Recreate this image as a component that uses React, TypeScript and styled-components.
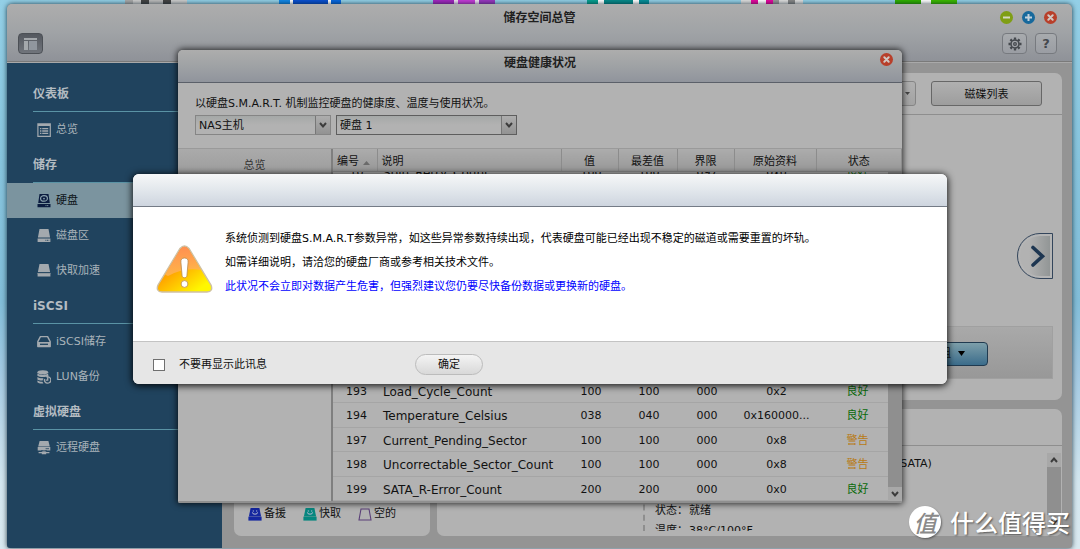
import React from "react";
import styled, { createGlobalStyle, css } from "styled-components";

const GlobalStyle = createGlobalStyle`
  * { box-sizing: border-box; }
  body {
    margin: 0;
    font-family: "DejaVu Sans", "Noto Sans CJK SC", sans-serif;
    font-size: 11px;
    line-height: 16px;
    color: #111;
  }
  button, select, input { font: inherit; color: inherit; margin: 0; }
`;

const Desktop = styled.div`
  position: relative;
  display: flex;
  flex-direction: column;
  min-height: 100vh;
  overflow: hidden;
  background: linear-gradient(#93cfe6 0%, #86c3dc 30%, #82bdd8 55%, #a3c9e2 68%, #d3e6ef 88%, #d9e9f0 100%);
`;

const Shortcuts = styled.div`
  display: flex;
  gap: 92px;
  height: 4px;
  padding-left: 125px;
  overflow: hidden;
`;

const Shortcut = styled.div<{ $fill: string }>`
  flex: none;
  width: 62px;
  background: ${(p) => p.$fill};
`;

const Window = styled.main`
  isolation: isolate;
  flex: 1;
  display: flex;
  flex-direction: column;
  margin: 0 8px 1px 7px;
  border-radius: 5px 5px 3px 3px;
  overflow: hidden;
  background: #949494;
  box-shadow: 0 0 5px rgba(0, 20, 30, 0.8);
`;

const WindowHead = styled.header`
  height: 58px;
  padding: 4px 15px 0 11px;
  background: linear-gradient(#adadad, #a0a3a6 50%, #8f9298);
  border-bottom: 1px solid #7a7a7a;
  box-shadow: 0 1px 0 #a9a9a9;
  z-index: 1;
`;

const HeadRow = styled.div`
  display: grid;
  grid-template-columns: 1fr auto 1fr;
  align-items: center;
  height: 18px;
  padding-left: 4px;
`;

const ToolRow = styled.div`
  display: flex;
  align-items: center;
  justify-content: space-between;
  margin-top: 7px;
`;

const Group = styled.div<{ $gap: number }>`
  display: flex;
  align-items: center;
  justify-content: flex-end;
  gap: ${(p) => p.$gap}px;
`;

const Title = styled.h1`
  grid-column: 2;
  margin: 0;
  padding-top: 2px;
  font-size: 12px;
  line-height: 16px;
  font-weight: 700;
  color: #1f1f1f;
`;

const RoundButton = styled.button<{ $color: string }>`
  display: flex;
  width: 13px;
  height: 13px;
  padding: 0;
  border: 0;
  border-radius: 50%;
  background: ${(p) => p.$color};
`;

const ToolButton = styled.button<{ $width: number; $dark?: boolean }>`
  display: flex;
  align-items: center;
  justify-content: center;
  width: ${(p) => p.$width}px;
  height: 21px;
  padding: 0;
  border: 1px solid #777a7f;
  border-radius: 4px;
  color: #44484d;
  font-size: 13px;
  font-weight: 700;
  background: linear-gradient(#a8abae, #9a9da3);
  ${(p) =>
    p.$dark &&
    css`
      border-color: #4c5056;
      background: linear-gradient(#54585f, #70747b);
    `}
`;

const Body = styled.div`
  flex: 1;
  display: flex;
`;

const Sidebar = styled.nav`
  flex: none;
  width: 215px;
  padding-top: 14px;
  background: #20435e;
`;

const SideHeading = styled.h2`
  display: flex;
  align-items: center;
  height: 36px;
  margin: 0 0 0 26px;
  border-bottom: 1px solid #5a93a5;
  font-size: 12px;
  font-weight: 700;
  color: #b4bcc2;
`;

const SideLink = styled.a<{ $active?: boolean }>`
  display: flex;
  align-items: center;
  gap: 5px;
  height: 35px;
  padding-left: 30px;
  color: ${(p) => (p.$active ? "#0d1318" : "#a9b3ba")};
  background: ${(p) => (p.$active ? "#7b949f" : "transparent")};
  text-decoration: none;
  svg { color: ${(p) => (p.$active ? "#0b1c40" : "#a3a9ae")}; }
`;

const Content = styled.div`
  flex: 1;
  min-width: 0;
  display: flex;
  flex-direction: column;
  gap: 9px;
  padding: 11px 10px 12px 12px;
`;

const Panel = styled.section`
  display: flex;
  flex-direction: column;
  min-width: 0;
  border-radius: 7px;
  background: #b2b2b2;
`;

const DiskPanel = styled(Panel)`
  min-height: 327px;
`;

const Toolbar = styled.div`
  display: flex;
  justify-content: flex-end;
  gap: 15px;
  padding: 8px 20px;
  border-bottom: 1px solid #8e8e8e;
`;

const PanelButton = styled.button`
  width: 111px;
  height: 25px;
  padding: 2px 0 0;
  border: 1px solid #676767;
  border-radius: 3px;
  background: linear-gradient(#b0b0b0, #9d9d9d);
`;

const EnclosureSelect = styled.button`
  display: flex;
  align-items: center;
  justify-content: flex-end;
  width: 180px;
  height: 25px;
  padding: 0 5px;
  border: 1px solid #858585;
  border-radius: 3px;
  background: linear-gradient(#b0b0b0, #a3a3a3);
`;

const Carousel = styled.div`
  flex: 1;
  display: flex;
  align-items: center;
  justify-content: flex-end;
  padding: 70px 9px 0 0;
`;

const NextButton = styled.button`
  width: 36px;
  height: 46px;
  padding: 0;
  border: 0;
  background: none;
  svg { display: block; }
`;

const ActionBar = styled.div`
  display: flex;
  justify-content: flex-end;
  align-items: center;
  height: 53px;
  margin: 0 9px 21px;
  padding: 2px 64px 0 0;
  border: 1px solid #a0a0a0;
  background: linear-gradient(#a9a9a9, #989898);
`;

const ActionButton = styled.button`
  display: flex;
  align-items: center;
  justify-content: flex-end;
  gap: 7px;
  width: 90px;
  height: 24px;
  padding: 0 22px 0 0;
  border: 1px solid #203a50;
  border-radius: 4px;
  background: linear-gradient(#7d9faa, #3b6c8b);
`;

const Lower = styled.div`
  flex: 1;
  display: flex;
  gap: 7px;
`;

const LegendPanel = styled(Panel)`
  flex: none;
  width: 196px;
  justify-content: flex-end;
`;

const Legend = styled.div`
  display: flex;
  gap: 17px;
  padding: 0 0 14px 14px;
`;

const LegendItem = styled.span`
  display: flex;
  align-items: center;
  gap: 2px;
`;

const DetailPanel = styled(Panel)`
  flex: 1;
`;

const DetailHead = styled.div`
  height: 37px;
  border-bottom: 1px solid #8e8e8e;
`;

const DetailBody = styled.div`
  flex: 1;
  display: flex;
  justify-content: space-between;
  padding: 7px 1px 0 206px;
`;

const DetailText = styled.div`
  display: flex;
  flex-direction: column;
  height: 78px;
  padding: 3px 0 0 10px;
  border-left: 2px dashed #8e8e8e;
  overflow: hidden;
`;

const Model = styled.div`
  padding-left: 241px;
  margin-bottom: 31px;
`;

const Fact = styled.div`
  display: flex;
  flex: none;
  gap: 1px;
  height: 20px;
  line-height: 16px;
`;

const ScrollBar = styled.div<{ $height?: number }>`
  flex: none;
  display: flex;
  flex-direction: column;
  align-items: center;
  width: 14px;
  height: ${(p) => (p.$height ? `${p.$height}px` : "auto")};
  background: #a8a8a8;
`;

const Thumb = styled.div`
  flex: 1;
  width: 100%;
  background: #8f8f8f;
`;

const Layer = styled.div<{ $top: number }>`
  position: absolute;
  inset: 0;
  display: flex;
  justify-content: center;
  align-items: flex-start;
  padding-top: ${(p) => p.$top}px;
`;

const HealthDialog = styled.section`
  display: flex;
  flex-direction: column;
  width: 724px;
  height: 453px;
  border-radius: 5px 5px 2px 2px;
  background: #b2b2b2;
  box-shadow: 0 0 6px 1px rgba(0, 0, 0, 0.75);
  overflow: hidden;
`;

const HealthHead = styled.header`
  flex: none;
  display: grid;
  grid-template-columns: 1fr auto 1fr;
  align-items: start;
  height: 33px;
  padding: 3px 9px 0;
  border-bottom: 1px solid #5b6069;
  background: linear-gradient(#adadad, #9fa2a5 50%, #90949c);
`;

const Intro = styled.div`
  flex: none;
  height: 65px;
  padding: 13px 17px 0;
`;

const IntroText = styled.p`
  margin: 0 0 3px;
`;

const Selects = styled.div`
  display: flex;
  gap: 5px;
`;

const SelectBox = styled.div<{ $width: number; $strong?: boolean }>`
  display: grid;
  width: ${(p) => p.$width}px;
  height: 20px;
  border: 1px solid ${(p) => (p.$strong ? "#5e5e5e" : "#858585")};
  background: linear-gradient(#a5a8a7, #b2b2b2 50%);
`;

const Select = styled.select`
  grid-area: 1 / 1;
  appearance: none;
  width: 100%;
  padding: 2px 18px 0 3px;
  border: 0;
  background: transparent;
`;

const SelectArrow = styled.span`
  grid-area: 1 / 1;
  justify-self: end;
  display: flex;
  align-items: center;
  justify-content: center;
  width: 15px;
  border-left: 1px solid #777;
  background: linear-gradient(#adadad, #929292);
  pointer-events: none;
`;

const HealthBody = styled.div`
  flex: 1;
  min-height: 0;
  display: flex;
  border-top: 1px solid #9a9a9a;
  border-bottom: 2px solid #8f8f8f;
`;

const Tabs = styled.div`
  width: 155px;
  border-right: 2px solid #7f7f7f;
`;

const Tab = styled.button`
  display: block;
  width: 100%;
  height: 33px;
  border: 0;
  color: #333;
  background: linear-gradient(#aaa, #999);
`;

const Attributes = styled.div`
  flex: 1;
  min-width: 0;
  display: flex;
  flex-direction: column;
`;

const Grid = styled.table`
  width: 100%;
  table-layout: fixed;
  border-collapse: collapse;
  flex: none;
`;

const HeadCell = styled.th<{ $left?: boolean }>`
  height: 22px;
  padding: 4px 4px 0;
  border-right: 1px solid #8c8c8c;
  border-bottom: 1px solid #8a8a8a;
  font-weight: 400;
  text-align: ${(p) => (p.$left ? "left" : "center")};
  background: linear-gradient(#acacac, #989898);
  white-space: nowrap;
  svg { margin-left: 4px; }
`;

const Rows = styled.div`
  flex: 1;
  min-height: 0;
  display: flex;
`;

const RowsView = styled.div`
  flex: 1;
  display: flex;
  flex-direction: column;
  justify-content: flex-end;
  overflow: hidden;
`;

const BodyGrid = styled(Grid)`
  height: 341px;
`;

const Gap = styled.td`
  height: 195px;
  padding: 0;
`;

const Cell = styled.td<{ $kind?: "name" | "good" | "warn" }>`
  padding: 3px 0 0 3px;
  border-bottom: 1px solid #a5a5a5;
  text-align: center;
  line-height: 16px;
  white-space: nowrap;
  ${(p) =>
    p.$kind === "name" &&
    css`
      padding-left: 6px;
      text-align: left;
      font-size: 12px;
    `}
  ${(p) =>
    (p.$kind === "good" || p.$kind === "warn") &&
    css`
      padding-left: 11px;
      color: ${p.$kind === "good" ? "#0a6a0a" : "#b87a14"};
    `}
`;

const Alert = styled.section`
  width: 814px;
  border-radius: 6px;
  background: #fff;
  box-shadow: 0 1px 7px 1px rgba(0, 0, 0, 0.85);
  overflow: hidden;
`;

const AlertHead = styled.header`
  height: 33px;
  border-bottom: 1px solid #747b86;
  background: linear-gradient(#f6f7f8, #e2e7ec 50%, #ced5df);
`;

const AlertBody = styled.div`
  display: flex;
  gap: 12px;
  height: 134px;
  padding: 20px 23px 0;
`;

const AlertIcon = styled.div`
  padding-top: 18px;
  svg { display: block; }
`;

const AlertText = styled.p<{ $link?: boolean }>`
  margin: 0;
  line-height: 24px;
  color: ${(p) => (p.$link ? "#00f" : "#000")};
`;

const AlertFoot = styled.footer`
  display: grid;
  grid-template-columns: 282px auto 1fr;
  align-items: center;
  height: 43px;
  padding-top: 2px;
  border-top: 1px solid #c3c3c3;
  background: #e6e6e6;
`;

const Mute = styled.label`
  display: flex;
  align-items: center;
  gap: 14px;
  padding: 2px 0 0 20px;
`;

const Check = styled.input`
  appearance: none;
  width: 12px;
  height: 12px;
  border: 1px solid #6f6f6f;
  background: #fff;
`;

const Confirm = styled.button`
  width: 68px;
  height: 21px;
  padding: 1px 0 0;
  border: 1px solid #bcbcbc;
  border-radius: 11px;
  background: linear-gradient(#f4f4f4, #d8d8d8);
`;

const Watermark = styled.div`
  position: absolute;
  right: 10px;
  bottom: 9px;
  display: flex;
  align-items: center;
  gap: 9px;
  font-family: "Noto Sans CJK SC", sans-serif;
  font-size: 24px;
  line-height: 36px;
  font-weight: 500;
  color: #fff;
  text-shadow: 1px 1px 2px rgba(0, 0, 0, 0.55);
`;

const Seal = styled.span`
  display: flex;
  align-items: center;
  justify-content: center;
  width: 32px;
  height: 32px;
  border-radius: 50%;
  background: #fff;
  color: #8a8a8a;
  font-size: 23px;
  font-style: italic;
  text-shadow: none;
  box-shadow: 1px 1px 2px rgba(0, 0, 0, 0.4);
`;

const Cross = () => (
  <svg width="13" height="13" viewBox="0 0 13 13" stroke="#d0c8c4" strokeWidth="2" strokeLinecap="round">
    <path d="M4.3 4.3l4.4 4.4M8.7 4.3L4.3 8.7" />
  </svg>
);

const Chevron = ({ up }: { up?: boolean }) => (
  <svg width="14" height="14" viewBox="0 0 14 14" fill="none" stroke="#3c3c3c" strokeWidth="2">
    <path d={up ? "M4 9l3-3.4L10 9" : "M4 5l3 3.4L10 5"} />
  </svg>
);

type IconName = "list" | "disk" | "volume" | "cache" | "iscsi" | "lun" | "remote";

const drawings: Record<IconName, React.ReactNode> = {
  list: (
    <>
      <path fill="none" stroke="currentColor" strokeWidth="1.2" d="M.9.9h12.4v12.4H.9z" />
      <path stroke="currentColor" strokeWidth="2" d="M1 2h12" />
      <path stroke="currentColor" strokeWidth="1.3" d="M3 5.7h1.4M5.2 5.7h6M3 8h1.4M5.2 8h6M3 10.3h1.4M5.2 10.3h6" />
    </>
  ),
  disk: (
    <>
      <path fill="currentColor" d="M2.5 0h9l1.3 9H1.2zM.5 10h13v3.2h-13z" />
      <ellipse cx="7" cy="4.4" rx="3.4" ry="2.8" fill="none" stroke="#8ba2ad" strokeWidth="1.2" />
      <circle cx="7" cy="4.6" r=".9" fill="#8ba2ad" />
      <path stroke="#7b949f" d="M8.5 11.6h3.4" strokeDasharray="1 .6" />
    </>
  ),
  volume: (
    <>
      <path fill="currentColor" d="M2.5 0h9l1.6 8.6H.9zM.6 9.5h12.8V13H.6z" />
      <path stroke="#20435e" strokeWidth=".9" d="M8.4 11.3h3.8" strokeDasharray="1 .6" />
    </>
  ),
  cache: (
    <>
      <path fill="currentColor" d="M2.5 0h9l1.6 8H.9zM.6 9h12.8v3.6H.6z" />
      <path stroke="#8d959b" d="M.6 9.4h12.8" />
    </>
  ),
  iscsi: (
    <>
      <path fill="none" stroke="currentColor" strokeWidth="1.4" strokeLinejoin="round" d="M3.4 1.6h7.2l2.6 5v5H.8v-5z" />
      <path fill="currentColor" d="M1 7h12v4.4H1z" />
      <path stroke="#20435e" strokeWidth="1.3" d="M3 9.3h8" />
    </>
  ),
  lun: (
    <>
      <ellipse cx="5.8" cy="2.2" rx="5.4" ry="2" fill="currentColor" />
      <path fill="currentColor" d="M.4 3.6c2 1.6 8.8 1.6 10.8 0v2.2c-2 1.6-8.8 1.6-10.8 0zM.4 7c1.4 1.2 4 1.4 6 1.2l-.8 2.2c-2 .1-4-.1-5.2-1zM.4 10.6c1.4 1 3 1.2 5 1.2l1 1.6c-2.6.3-5-.1-6-1.2z" />
      <path fill="none" stroke="currentColor" strokeWidth="1.3" d="M7.6 9a3.2 3.2 0 1 0 3-2.2M10.7 8v2.2h-2" />
      <path fill="currentColor" d="M11.3 4.9v3.6L8.6 6.7z" />
    </>
  ),
  remote: (
    <>
      <path fill="currentColor" d="M2.6 0h8.800l1.400 5.600H1.200zM.7 6h12.600v3.400H.7z" />
      <path fill="currentColor" d="M6.200 9h1.600v3H6.200zM1.600 11h10.800v1.300H1.600zM4.800 10.200h4.400v3H4.800z" />
      <path stroke="#20435e" strokeWidth=".8" d="M8.600 7.700h3.400M4 9.800h6" />
    </>
  ),
};

const SideIcon = ({ name }: { name: IconName }) => (
  <svg width="14" height="14" viewBox="0 0 14 14">
    {drawings[name]}
  </svg>
);

const DriveMark = ({ color, hollow }: { color: string; hollow?: boolean }) => (
  <svg width="14" height="13" viewBox="0 0 14 13">
    {hollow ? (
      <path d="M3 1h8l2 11H1z" fill="none" stroke={color} strokeWidth="1.1" />
    ) : (
      <>
        <path d="M2.6 0h8.8L13 8H1z" fill={color} />
        <path d="M.4 8.6h13.2v4H.4z" fill={color} />
        <path d="M1 8.5h12" stroke={color} strokeOpacity=".6" strokeWidth=".8" />
        <path d="M4.4 4.4a2.6 1.8 0 0 0 5.2 0M5.3 2.4v1.2M8.7 2.4v1.2" stroke="#b4bad2" fill="none" />
      </>
    )}
  </svg>
);

const Gear = () => (
  <svg width="14" height="14" viewBox="0 0 14 14" fill="none" stroke="#44484d">
    <circle cx="7" cy="7" r="4" strokeWidth="1.5" />
    <circle cx="7" cy="7" r="1.3" strokeWidth="1.3" />
    <path strokeWidth="2.3" d="M7 .5v2.200M7 11.300v2.200M.5 7h2.200M11.300 7h2.200M2.400 2.400l1.600 1.600M10 10l1.600 1.600M11.600 2.400L10 4M4 10l-1.600 1.600" />
  </svg>
);

const Warning = () => (
  <svg width="57" height="48" viewBox="0 0 57 48">
    <defs>
      <linearGradient id="amber" x1="0" y1="0.2" x2="0.7" y2="1">
        <stop offset="0" stopColor="#ff8a1c" />
        <stop offset="0.45" stopColor="#ffa800" />
        <stop offset="1" stopColor="#fff700" />
      </linearGradient>
      <linearGradient id="gloss" x1="0" y1="0" x2="0" y2="1">
        <stop offset="0" stopColor="#ff8f50" />
        <stop offset="1" stopColor="#ffb765" stopOpacity="0.7" />
      </linearGradient>
    </defs>
    <path d="M24 3.500Q28.500-1.500 33 3.500L55 40Q57.500 46.500 51 47H6Q-.5 46.500 2 40Z" fill="url(#amber)" stroke="#cfc0a4" strokeWidth="1.4" />
    <path d="M24.500 4Q28.500-.5 32.500 4L45 25Q28 22 12 31L9 29.500Z" fill="url(#gloss)" />
    <path d="M28.500 13c2.600 0 3.900 1.600 3.600 4.200l-1.200 13.600c-.4 2.600-4.400 2.600-4.800 0L24.900 17.200C24.600 14.600 25.900 13 28.500 13z" fill="#fff" stroke="#b98a4c" strokeWidth=".8" />
    <circle cx="28.5" cy="39" r="3.4" fill="#fff" stroke="#b98a4c" strokeWidth=".8" />
  </svg>
);

const shortcuts = [
  "linear-gradient(90deg, #aaa 0 8px, #ccc 8px 16px, #444 16px 24px, #bbb 24px 38px, #444 38px 46px, #ccc 46px)",
  "linear-gradient(90deg, #1288e8 0 11px, #fff 11px 14px, #0a50d0 14px 49px, #fff 49px 52px, #0868e0 52px)",
  "linear-gradient(90deg, #a428c0 0 21px, #f0e0f4 21px 25px, #c63cd8 25px 42px, #f0e0f4 42px 46px, #9a38c0 46px)",
  "linear-gradient(90deg, #08a090 0 11px, #fff 11px 17px, #078a8a 17px 46px, #fff 46px 52px, #07909a 52px)",
  "linear-gradient(90deg, #ddd 0 10px, #e808a0 10px 17px, #fff 17px 25px, #e808a0 25px 32px, #999 32px 38px, #ddd 38px 47px, #888 47px 54px, #ddd 54px)",
  "linear-gradient(90deg, #2fb000 0 26px, #fff 26px 36px, #3cba00 36px)",
];

const sections: { title: string; links: { icon: IconName; text: string; active?: boolean }[] }[] = [
  { title: "仪表板", links: [{ icon: "list", text: "总览" }] },
  {
    title: "储存",
    links: [
      { icon: "disk", text: "硬盘", active: true },
      { icon: "volume", text: "磁盘区" },
      { icon: "cache", text: "快取加速" },
    ],
  },
  {
    title: "iSCSI",
    links: [
      { icon: "iscsi", text: "iSCSI储存" },
      { icon: "lun", text: "LUN备份" },
    ],
  },
  { title: "虚拟硬盘", links: [{ icon: "remote", text: "远程硬盘" }] },
];

type Attribute = [string, string, string, string, string, string, "good" | "warn"];

const firstRow: Attribute = ["10", "Spin_Retry_Count", "100", "100", "097", "0x0", "good"];

const attributes: Attribute[] = [
  ["193", "Load_Cycle_Count", "100", "100", "000", "0x2", "good"],
  ["194", "Temperature_Celsius", "038", "040", "000", "0x160000...", "good"],
  ["197", "Current_Pending_Sector", "100", "100", "000", "0x8", "warn"],
  ["198", "Uncorrectable_Sector_Count", "100", "100", "000", "0x8", "warn"],
  ["199", "SATA_R-Error_Count", "200", "200", "000", "0x0", "good"],
];

const Columns = () => (
  <colgroup>
    {[44, 184, 57, 59, 57, 82].map((width, i) => (
      <col key={i} width={width} />
    ))}
    <col />
  </colgroup>
);

const AttributeRow = ({ data }: { data: Attribute }) => {
  const [id, name, value, worst, limit, raw, state] = data;
  return (
    <tr>
      <Cell>{id}</Cell>
      <Cell $kind="name">{name}</Cell>
      <Cell>{value}</Cell>
      <Cell>{worst}</Cell>
      <Cell>{limit}</Cell>
      <Cell>{raw}</Cell>
      <Cell $kind={state}>{state === "good" ? "良好" : "警告"}</Cell>
    </tr>
  );
};

export default function App() {
  return (
    <Desktop>
      <GlobalStyle />
      <Shortcuts>
        {shortcuts.map((fill) => (
          <Shortcut key={fill} $fill={fill} />
        ))}
      </Shortcuts>

      <Window>
        <WindowHead>
          <HeadRow>
            <Title>储存空间总管</Title>
            <Group $gap={9}>
              <RoundButton $color="#7f9e15" aria-label="最小化">
                <svg width="13" height="13" stroke="#d4d8c4" strokeWidth="2"><path d="M3 6.5h7" /></svg>
              </RoundButton>
              <RoundButton $color="#17699c" aria-label="最大化">
                <svg width="13" height="13" stroke="#c4d2dc" strokeWidth="2"><path d="M3 6.5h7M6.5 3v7" /></svg>
              </RoundButton>
              <RoundButton $color="#b83f2a" aria-label="关闭">
                <Cross />
              </RoundButton>
            </Group>
          </HeadRow>
          <ToolRow>
            <ToolButton $width={25} $dark aria-label="侧栏">
              <svg width="13" height="12" viewBox="0 0 13 12">
                <path fill="#a4a8ac" d="M0 0h13v2H0zM0 3h4v9H0z" />
                <path fill="#90969e" d="M5 3h8v9H5z" />
              </svg>
            </ToolButton>
            <Group $gap={8}>
              <ToolButton $width={25} aria-label="设置"><Gear /></ToolButton>
              <ToolButton $width={22}>?</ToolButton>
            </Group>
          </ToolRow>
        </WindowHead>

        <Body>
          <Sidebar>
            {sections.map((section) => (
              <React.Fragment key={section.title}>
                <SideHeading>{section.title}</SideHeading>
                {section.links.map((link) => (
                  <SideLink key={link.text} href="#" $active={link.active}>
                    <SideIcon name={link.icon} />
                    {link.text}
                  </SideLink>
                ))}
              </React.Fragment>
            ))}
          </Sidebar>

          <Content>
            <DiskPanel>
              <Toolbar>
                <EnclosureSelect aria-label="主机">
                  <svg width="5" height="3"><path d="M0 0h5L2.5 3z" fill="#444" /></svg>
                </EnclosureSelect>
                <PanelButton>磁碟列表</PanelButton>
              </Toolbar>
              <Carousel>
                <NextButton aria-label="下一页">
                  <svg width="36" height="46" viewBox="0 0 36 46">
                    <defs>
                      <linearGradient id="next" x1="0" x2="1">
                        <stop offset="0.3" stopColor="#b2b2b2" />
                        <stop offset="1" stopColor="#929696" />
                      </linearGradient>
                    </defs>
                    <path d="M35.500 .5H23a22.500 22.500 0 0 0 0 45h12.500z" fill="#b5b5b5" stroke="#33455b" />
                    <path d="M33 3H23a20 20 0 0 0 0 40h10z" fill="url(#next)" />
                    <path d="M16 14.500l9.500 8.800L16 32" fill="none" stroke="#1d3651" strokeWidth="3.6" strokeLinecap="round" />
                  </svg>
                </NextButton>
              </Carousel>
              <ActionBar>
                <ActionButton>
                  组
                  <svg width="7" height="5"><path d="M0 0h7L3.5 5z" fill="#000" /></svg>
                </ActionButton>
              </ActionBar>
            </DiskPanel>

            <Lower>
              <LegendPanel>
                <Legend>
                  <LegendItem><DriveMark color="#1527a0" />备援</LegendItem>
                  <LegendItem><DriveMark color="#07877f" />快取</LegendItem>
                  <LegendItem><DriveMark color="#5a3f78" hollow />空的</LegendItem>
                </Legend>
              </LegendPanel>
              <DetailPanel>
                <DetailHead />
                <DetailBody>
                  <DetailText>
                    <Model>(SATA)</Model>
                    <Fact><span>状态：</span><span>就绪</span></Fact>
                    <Fact><span>温度：</span><span>38°C/100°F</span></Fact>
                  </DetailText>
                  <ScrollBar $height={76}>
                    <Chevron up />
                    <Thumb />
                    <Chevron />
                  </ScrollBar>
                </DetailBody>
              </DetailPanel>
            </Lower>
          </Content>
        </Body>
      </Window>

      <Layer $top={50}>
        <HealthDialog>
          <HealthHead>
            <Title as="h2">硬盘健康状况</Title>
            <Group $gap={0}>
              <RoundButton $color="#b83f2a" aria-label="关闭">
                <Cross />
              </RoundButton>
            </Group>
          </HealthHead>
          <Intro>
            <IntroText>以硬盘S.M.A.R.T. 机制监控硬盘的健康度、温度与使用状况。</IntroText>
            <Selects>
              <SelectBox $width={136}>
                <Select aria-label="主机"><option>NAS主机</option></Select>
                <SelectArrow><Chevron /></SelectArrow>
              </SelectBox>
              <SelectBox $width={181} $strong>
                <Select aria-label="硬盘"><option>硬盘 1</option></Select>
                <SelectArrow><Chevron /></SelectArrow>
              </SelectBox>
            </Selects>
          </Intro>
          <HealthBody>
            <Tabs>
              <Tab>总览</Tab>
            </Tabs>
            <Attributes>
              <Grid>
                <Columns />
                <thead>
                  <tr>
                    <HeadCell $left>
                      编号
                      <svg width="7" height="4"><path d="M0 4h7L3.5 0z" fill="#6a6a6a" /></svg>
                    </HeadCell>
                    <HeadCell $left>说明</HeadCell>
                    <HeadCell>值</HeadCell>
                    <HeadCell>最差值</HeadCell>
                    <HeadCell>界限</HeadCell>
                    <HeadCell>原始资料</HeadCell>
                    <HeadCell>状态</HeadCell>
                  </tr>
                </thead>
              </Grid>
              <Rows>
                <RowsView>
                  <BodyGrid>
                    <Columns />
                    <tbody>
                      <AttributeRow data={firstRow} />
                      <tr><Gap colSpan={7} /></tr>
                      {attributes.map((row) => (
                        <AttributeRow key={row[0]} data={row} />
                      ))}
                    </tbody>
                  </BodyGrid>
                </RowsView>
                <ScrollBar>
                  <Thumb />
                  <Chevron />
                </ScrollBar>
              </Rows>
            </Attributes>
          </HealthBody>
        </HealthDialog>
      </Layer>

      <Layer $top={174}>
        <Alert role="alertdialog">
          <AlertHead />
          <AlertBody>
            <AlertIcon><Warning /></AlertIcon>
            <div>
              <AlertText>系统侦测到硬盘S.M.A.R.T参数异常，如这些异常参数持续出现，代表硬盘可能已经出现不稳定的磁道或需要重置的坏轨。</AlertText>
              <AlertText>如需详细说明，请洽您的硬盘厂商或参考相关技术文件。</AlertText>
              <AlertText $link>此状况不会立即对数据产生危害，但强烈建议您仍要尽快备份数据或更换新的硬盘。</AlertText>
            </div>
          </AlertBody>
          <AlertFoot>
            <Mute>
              <Check type="checkbox" />
              不要再显示此讯息
            </Mute>
            <Confirm>确定</Confirm>
          </AlertFoot>
        </Alert>
      </Layer>

      <Watermark>
        <Seal>值</Seal>
        <span>什么值得买</span>
      </Watermark>
    </Desktop>
  );
}
